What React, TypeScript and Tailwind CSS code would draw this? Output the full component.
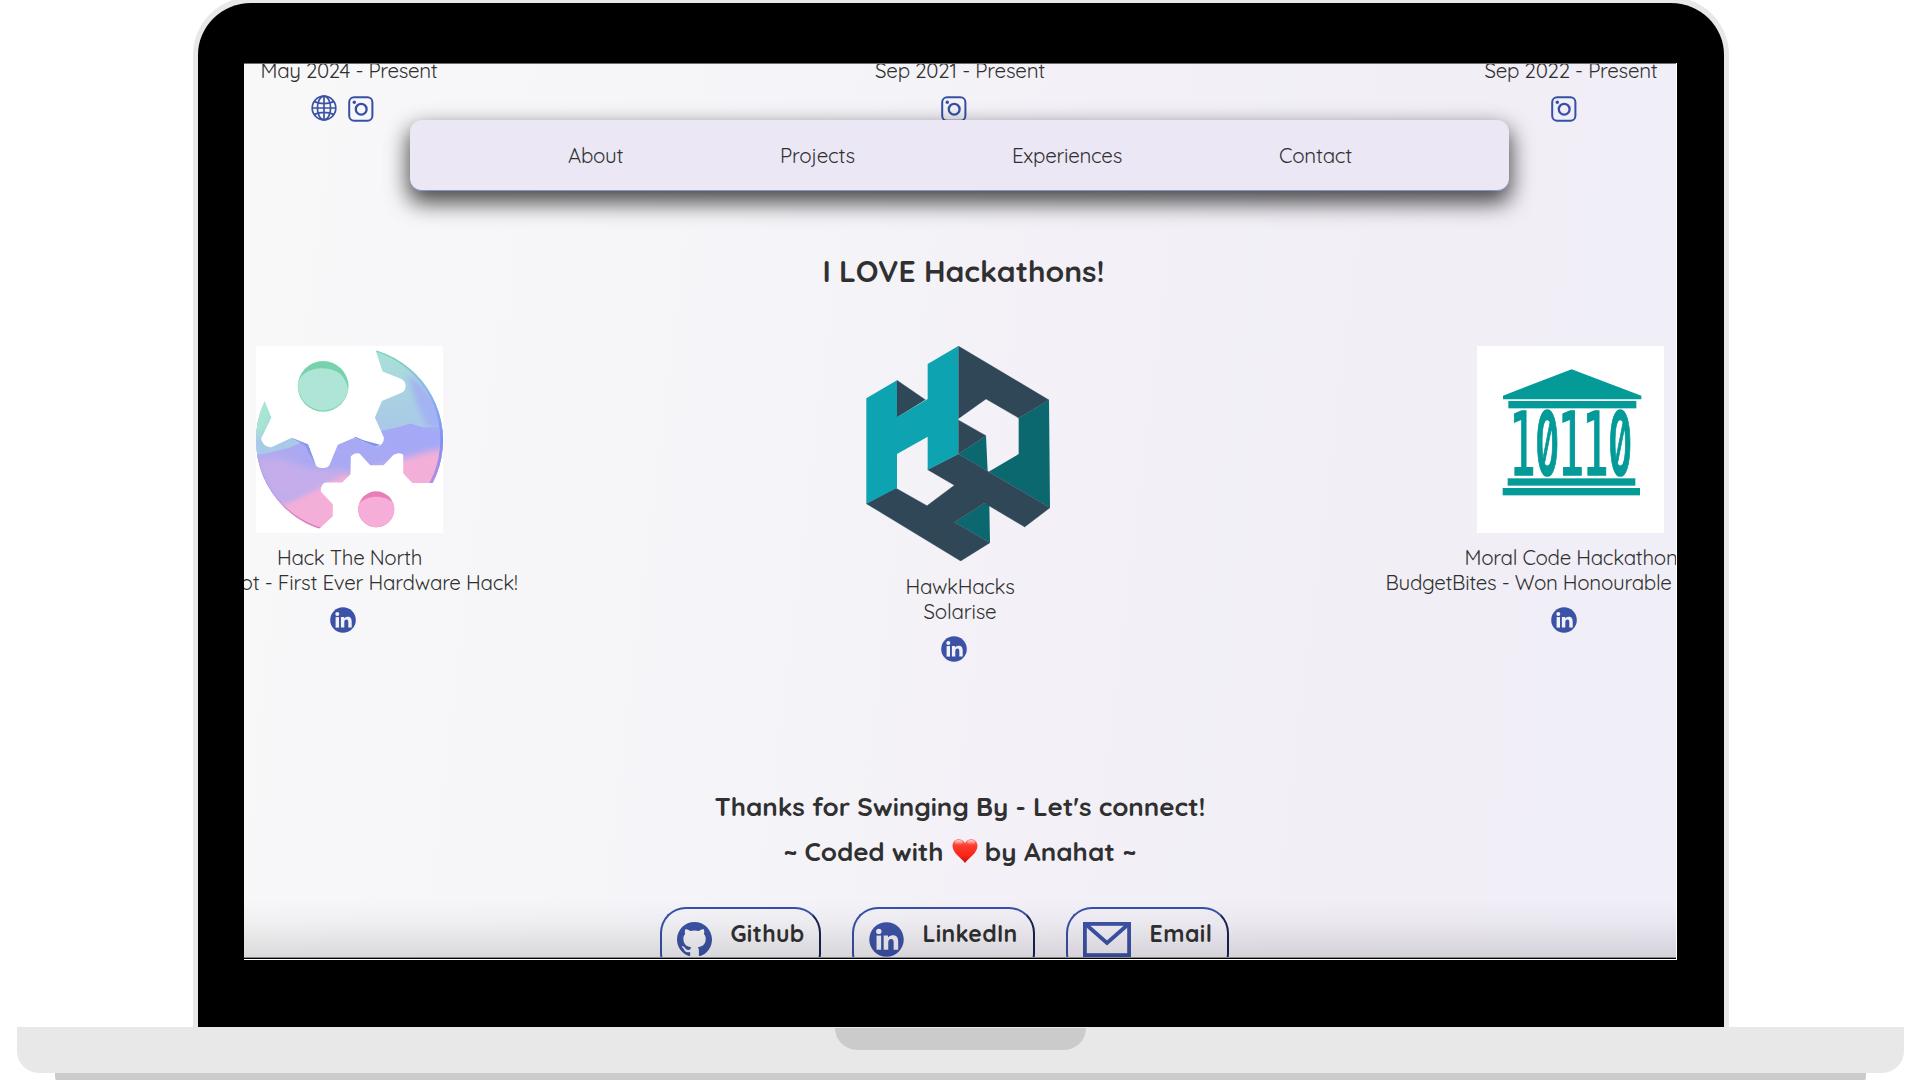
import { useLayoutEffect, useRef, useState, type ReactNode } from "react";

const SANS = "font-['Quicksand','Lato',sans-serif]";

/* Single line of text whose tracking is adjusted so that it fills `width`. */
function Fit({ text, width, className = "" }: { text: string; width: number; className?: string }) {
  const ref = useRef<HTMLSpanElement>(null);
  const [spacing, setSpacing] = useState(0);
  useLayoutEffect(() => {
    const el = ref.current;
    if (!el) return;
    const natural = el.getBoundingClientRect().width - spacing * text.length;
    setSpacing((width - natural) / text.length);
  }, [text, width]);
  return (
    <span ref={ref} className={`inline-block whitespace-pre ${className}`} style={{ letterSpacing: `${spacing}px` }}>
      {text}
    </span>
  );
}

function Globe() {
  return (
    <svg viewBox="0 0 26 26" className="-mt-px size-[26px]" fill="none" stroke="#3c52a4" strokeWidth="1.7">
      <circle cx="13" cy="13" r="11.8" />
      <ellipse cx="13" cy="13" rx="6.6" ry="11.8" />
      <path d="M13 1v24M1 13h24M3.2 6.6c6 2.4 13.600 2.400 19.600 0M3.200 19.400c6-2.400 13.600-2.400 19.600 0" />
    </svg>
  );
}

function Instagram() {
  return (
    <svg viewBox="0 0 26 26" className="size-[26px]" fill="none" stroke="#3650a8" strokeWidth="2">
      <rect x="1.200" y="1.200" width="23.200" height="23.600" rx="5" />
      <circle cx="13.200" cy="13.200" r="5.400" strokeWidth="2.300" />
      <circle cx="6.300" cy="6.300" r="1.700" fill="#3650a8" stroke="none" />
    </svg>
  );
}

function LinkedIn({ className }: { className: string }) {
  return (
    <svg viewBox="0 0 26 26" className={className}>
      <circle cx="13" cy="13" r="12.800" fill="#3c52a6" />
      <g fill="#f2f1f8">
        <circle cx="7.300" cy="7" r="2" />
        <rect x="5.600" y="10.100" width="3.400" height="10.500" />
        <path d="M10.900 10.100h3.200v1.500c.7-1.100 1.900-1.800 3.500-1.800 3.100 0 4.100 2 4.100 5v5.800h-3.400v-5.300c0-1.600-.4-2.700-1.800-2.700-1.600 0-2.200 1.200-2.200 2.700v5.300h-3.400z" />
      </g>
    </svg>
  );
}

function Github() {
  return (
    <svg viewBox="0 0 24 24" className="size-[35px]" fill="#3c52a6">
      <path d="M12 0C5.370 0 0 5.370 0 12c0 5.300 3.440 9.800 8.210 11.390.6.110.82-.26.82-.58v-2.230c-3.340.73-4.040-1.420-4.040-1.420-.55-1.390-1.330-1.760-1.330-1.760-1.090-.74.08-.73.08-.73 1.200.09 1.840 1.240 1.840 1.240 1.070 1.830 2.810 1.300 3.490 1 .11-.78.420-1.310.760-1.610-2.660-.3-5.470-1.330-5.470-5.930 0-1.310.47-2.380 1.240-3.220-.12-.3-.54-1.520.12-3.180 0 0 1.010-.32 3.300 1.230a11.500 11.500 0 0 1 6.010 0c2.290-1.550 3.300-1.230 3.300-1.230.66 1.660.24 2.880.12 3.180.77.840 1.240 1.910 1.240 3.220 0 4.610-2.810 5.630-5.490 5.920.43.370.82 1.100.82 2.220v3.290c0 .32.22.7.83.58A12 12 0 0 0 24 12C24 5.370 18.630 0 12 0z" />
    </svg>
  );
}

function Mail() {
  return (
    <svg viewBox="0 0 48 35" className="h-[35px] w-[48px]" fill="none" stroke="#3c52a6" strokeWidth="3.800">
      <rect x="1.900" y="1.900" width="44.200" height="31.200" />
      <path d="M3 2.500 24 21 45 2.500" />
    </svg>
  );
}

function Heart() {
  return (
    <svg viewBox="0 0 26 26" className="mt-[8px] ml-px -mr-px h-[26px] w-[26px]">
      <defs>
        <linearGradient id="heart" x1="0" y1="0" x2="0" y2="1">
          <stop offset="0" stopColor="#ff6d62" />
          <stop offset=".3" stopColor="#fb3a2d" />
          <stop offset=".7" stopColor="#f92419" />
          <stop offset="1" stopColor="#b81208" />
        </linearGradient>
        <linearGradient id="shine" x1="0" y1="0" x2="0" y2="1">
          <stop offset="0" stopColor="#fff" stopOpacity=".7" />
          <stop offset="1" stopColor="#fff" stopOpacity="0" />
        </linearGradient>
      </defs>
      <path
        d="M13 25C10 20.500.5 15.500.5 7.800.5 3.800 3.300 1.200 6.800 1.200c2.700 0 5 1.500 6.200 4 1.200-2.500 3.500-4 6.200-4 3.500 0 6.300 2.600 6.300 6.600C25.500 15.500 16 20.500 13 25z"
        fill="url(#heart)"
      />
      <ellipse cx="6.800" cy="4.400" rx="4" ry="2.400" fill="url(#shine)" />
      <ellipse cx="19.200" cy="4.400" rx="4" ry="2.400" fill="url(#shine)" />
    </svg>
  );
}

function GearsLogo() {
  return (
    <svg viewBox="78 48 560 560" className="ml-px size-[187px] bg-white">
      <defs>
        <clipPath id="disc">
          <circle cx="358" cy="330" r="280" />
        </clipPath>
        <linearGradient id="sky" x1="0" y1="0" x2="0" y2="1">
          <stop offset="0" stopColor="#a9e3d6" />
          <stop offset=".2" stopColor="#a9d5df" />
          <stop offset=".45" stopColor="#a9c9e8" />
        </linearGradient>
        <linearGradient id="blue" x1="1" y1="0" x2="0" y2="1">
          <stop offset="0" stopColor="#a3a8f8" />
          <stop offset=".5" stopColor="#aaa9f2" />
          <stop offset="1" stopColor="#d0aee6" />
        </linearGradient>
        <linearGradient id="rim" x1="0" y1="0" x2="0" y2="1">
          <stop offset="0" stopColor="#78d6b0" />
          <stop offset=".25" stopColor="#8bb5ee" />
          <stop offset=".5" stopColor="#7a92f6" />
          <stop offset=".75" stopColor="#b78ddf" />
          <stop offset="1" stopColor="#ee74b8" />
        </linearGradient>
        <filter id="soft" x="-10%" y="-10%" width="120%" height="120%">
          <feGaussianBlur stdDeviation="9" />
        </filter>
      </defs>
      <g clipPath="url(#disc)">
        <rect x="78" y="48" width="560" height="560" fill="url(#sky)" />
        <path d="M70 190 125 200 125 270 90 320 70 320z" fill="#a6e6d2" filter="url(#soft)" />
        <path
          d="M60 375 110 370 180 352 230 330 380 325 455 302 510 290 540 280 580 292 660 288V640H60z"
          fill="url(#blue)"
        />
        <path d="M530 130 570 160 640 240V300L590 290 560 220z" fill="#a3b2f3" filter="url(#soft)" />
        <path
          d="M120 540 200 505 260 465 330 430 400 430 520 385 590 365 660 350V640H100z"
          fill="#f3afd8"
          filter="url(#soft)"
        />
        <path d="M80 390 150 385 235 415 350 420 270 470 180 505 130 490z" fill="#c4adea" filter="url(#soft)" />
        <circle cx="354" cy="328" r="281" fill="none" stroke="url(#rim)" strokeWidth="10" />
      </g>
      <path
        fill="#fff"
        d="M78 48H438L438 66 457 124 510 145Q526 152 526 168T512 189L455 213 434 262 461 322Q462 346 436 350L372 323 323 344 299 402Q296 413 278 413T257 404L234 343 185 323 124 351Q100 352 93 326L124 262 104 213 78 270z"
      />
      <path d="M372 323 436 350 450 344 400 330 375 320z" fill="#8192e8" />
      <path d="M185 323 234 343 257 404 236 368 226 347z" fill="#8698e6" />
      <path
        fill="#fff"
        d="M362 378Q372 366 388 370L420 405H460L490 374Q508 364 519 374V430L546 458H606L638 460V608H240L270 593 308 558V522L272 484Q272 458 288 457H336L361 432z"
      />
      <circle cx="279" cy="169" r="76" fill="#76d3ab" />
      <path d="M204 158C218 112 286 105 322 126 344 139 351 163 354 181A76 76 0 0 1 204 158z" fill="#aee5d6" />
      <circle cx="438" cy="537" r="54" fill="#ea7cba" />
      <path d="M387 520C410 492 466 493 489 518A54 54 0 1 1 387 520z" fill="#f6add8" />
    </svg>
  );
}

function HawkLogo() {
  return (
    <svg viewBox="78 48 552 645" className="h-[215px] w-[184px]">
      <path fill="#0b686f" d="M627 210 536 264V372L446 425 630 533z" />
      <path fill="#0b686f" d="M438 317 355 372 443 424z" />
      <path fill="#0b686f" d="M433 519 448 525 450 638 343 577z" />
      <g fill="#2f4757" stroke="#2f4757" strokeWidth="1">
        <path d="M355 48 627 210 536 264 438 207 355 266z" />
        <path d="M171 151 256 209 171 262z" />
        <path d="M355 270 438 317 355 372z" />
        <path d="M355 372 630 533 554 591 433 519 343 577 450 638 362 693 79 521 167 474 261 527 343 466 263 419z" />
      </g>
      <path
        fill="#0da3b1"
        d="M355 48 263 102V207L171 262V151L79 205V521L171 474V372L263 320V419L355 372z"
      />
    </svg>
  );
}

function BankLogo() {
  return (
    <svg viewBox="321 48 561 561" className="size-[187px] bg-white" fill="#039a98">
      <path d="M605 118 814 197V208H399V197z" />
      <rect x="415" y="213" width="384" height="22" />
      <g stroke="#039a98" strokeWidth="5" textAnchor="middle">
        {[
          { x: 457, d: "1" },
          { x: 532, d: "0" },
          { x: 603, d: "1" },
          { x: 676, d: "1" },
          { x: 751, d: "0" },
        ].map(({ x, d }) => (
          <text
            key={x}
            fontSize={262}
            transform={`translate(${x} 436) scale(${d === "1" ? 0.51 : 0.4} 1)`}
            className={
              d === "1"
                ? "font-['DejaVu_Sans_Mono',monospace]"
                : "font-['Inter',sans-serif] font-semibold [font-feature-settings:'zero']"
            }
          >
            {d}
          </text>
        ))}
      </g>
      <rect x="413" y="445" width="383" height="22" />
      <rect x="398" y="474" width="412" height="22" />
    </svg>
  );
}

function Slide({ children, className = "" }: { children: ReactNode; className?: string }) {
  return <div className={`flex w-[611px] shrink-0 flex-col items-center ${className}`}>{children}</div>;
}

function ContactButton({
  icon,
  label,
  labelWidth,
  className,
}: {
  icon: ReactNode;
  label: string;
  labelWidth: number;
  className: string;
}) {
  return (
    <a
      className={`flex h-[72px] items-start rounded-[26px] border-2 border-[#3650a8] border-r-[#18224d] border-b-[#18224d] pt-[13px] pl-[15px] ${className}`}
    >
      {icon}
      <Fit text={label} width={labelWidth} className="-mt-[2px] ml-[19px] text-[23px] leading-[28px] font-bold" />
    </a>
  );
}

const NAV = [
  { text: "About", width: 56 },
  { text: "Projects", width: 76 },
  { text: "Experiences", width: 111 },
  { text: "Contact", width: 74 },
];

export default function App() {
  return (
    <div className={`flex h-[1080px] w-[1920px] flex-col items-center overflow-hidden bg-white text-[#303030] ${SANS}`}>
      <div className="-mt-[3px] ml-[2px] flex h-[1030px] w-[1536px] shrink-0 rounded-t-[58px] border-x-[5px] border-t-[6px] border-[#e8e8e8] bg-black pt-[60px] pl-[46px]">
        <div className="relative flex h-[897px] w-[1433px] flex-col items-center overflow-hidden border-r border-b border-white bg-[linear-gradient(97deg,#f8f8f9_0%,#f6f6f9_25%,#f3f1f7_55%,#f1eef6_80%,#f0eef7_100%)]">
          {/* Clubs row, scrolled partly out of view */}
          <div className="-mt-[5px] flex h-[149px] w-[1833px] shrink-0 text-[20.500px] leading-[25px]">
            <Slide>
              <Fit text="May 2024 - Present" width={177} />
              <div className="mt-[13px] flex gap-[11px] pr-[13px]">
                <Globe />
                <Instagram />
              </div>
            </Slide>
            <Slide>
              <Fit text="Sep 2021 - Present" width={170} />
              <div className="mt-[13px] pr-[13px]">
                <Instagram />
              </div>
            </Slide>
            <Slide>
              <Fit text="Sep 2022 - Present" width={173} />
              <div className="mt-[13px] pr-[14px]">
                <Instagram />
              </div>
            </Slide>
          </div>

          <nav className="absolute top-[57px] left-[166px] flex h-[71px] w-[1099px] items-center justify-center gap-[157px] rounded-[12px] border-b border-[#8296cb] bg-[#ebe7f5] pl-px text-[20.500px] shadow-[0_10px_22px_2px_rgba(0,0,0,0.7)]">
            {NAV.map((n) => (
              <Fit key={n.text} text={n.text} width={n.width - 1} />
            ))}
          </nav>

          <h2 className="mt-[44px] ml-[7px] shrink-0 text-[30px] leading-[40px] font-bold">
            <Fit text="I LOVE Hackathons!" width={282} />
          </h2>

          <div className="mt-[55px] flex h-[423px] w-[1833px] shrink-0 text-[20.500px] leading-[25px]">
            <Slide>
              <GearsLogo />
              <Fit text="Hack The North" width={145} className="mt-[12px] ml-px" />
              <div className="flex w-[337px] justify-end">
                <Fit text="ot - First Ever Hardware Hack!" width={277} />
              </div>
              <div className="mt-[12px] pr-[13px]">
                <LinkedIn className="size-[26px]" />
              </div>
            </Slide>
            <Slide>
              <div className="pr-[5px]">
                <HawkLogo />
              </div>
              <Fit text="HawkHacks" width={109} className="mt-[13px]" />
              <Fit text="Solarise" width={73} />
              <div className="mt-[12px] pr-[13px]">
                <LinkedIn className="size-[26px]" />
              </div>
            </Slide>
            <Slide>
              <div className="pr-px">
                <BankLogo />
              </div>
              <Fit text="Moral Code Hackathon" width={213} className="mt-[12px]" />
              <div className="flex w-[371px]">
                <Fit text="BudgetBites - Won Honourable" width={286} />
              </div>
              <div className="mt-[12px] pr-[14px]">
                <LinkedIn className="size-[26px]" />
              </div>
            </Slide>
          </div>

          <footer className="flex flex-col items-center text-[26px] leading-[44px] font-bold">
            <Fit text="Thanks for Swinging By - Let's connect!" width={491} className="mt-[16px]" />
            <div className="mt-px flex">
              <Fit text="~ Coded with " width={167} />
              <Heart />
              <Fit text=" by Anahat ~" width={159} className="ml-px" />
            </div>
            <div className="mt-[33px] mr-[32px] flex gap-[31px]">
              <ContactButton icon={<Github />} label="Github" labelWidth={74} className="w-[161px]" />
              <ContactButton
                icon={<LinkedIn className="size-[35px]" />}
                label="LinkedIn"
                labelWidth={95}
                className="w-[183px]"
              />
              <ContactButton icon={<Mail />} label="Email" labelWidth={63} className="w-[163px]" />
            </div>
          </footer>

          <div className="pointer-events-none absolute inset-x-0 bottom-0 h-[60px] border-b border-black bg-[linear-gradient(to_bottom,transparent,rgba(0,0,0,0.03)_40%,rgba(0,0,0,0.12))] shadow-[inset_0_-1px_0_#85858a]" />
          <div className="pointer-events-none absolute inset-x-0 top-0 h-px bg-[#6d6d6d]" />
        </div>
      </div>

      <div className="flex h-[46px] w-[1887px] shrink-0 justify-center rounded-b-[22px] bg-[#e8e8e8]">
        <div className="mt-px h-[22px] w-[251px] rounded-b-[22px] bg-[#cbcbcb]" />
      </div>
      <div className="h-[20px] w-[1811px] shrink-0 rounded-b-[18px] bg-[#cbcbcb]" />
    </div>
  );
}
